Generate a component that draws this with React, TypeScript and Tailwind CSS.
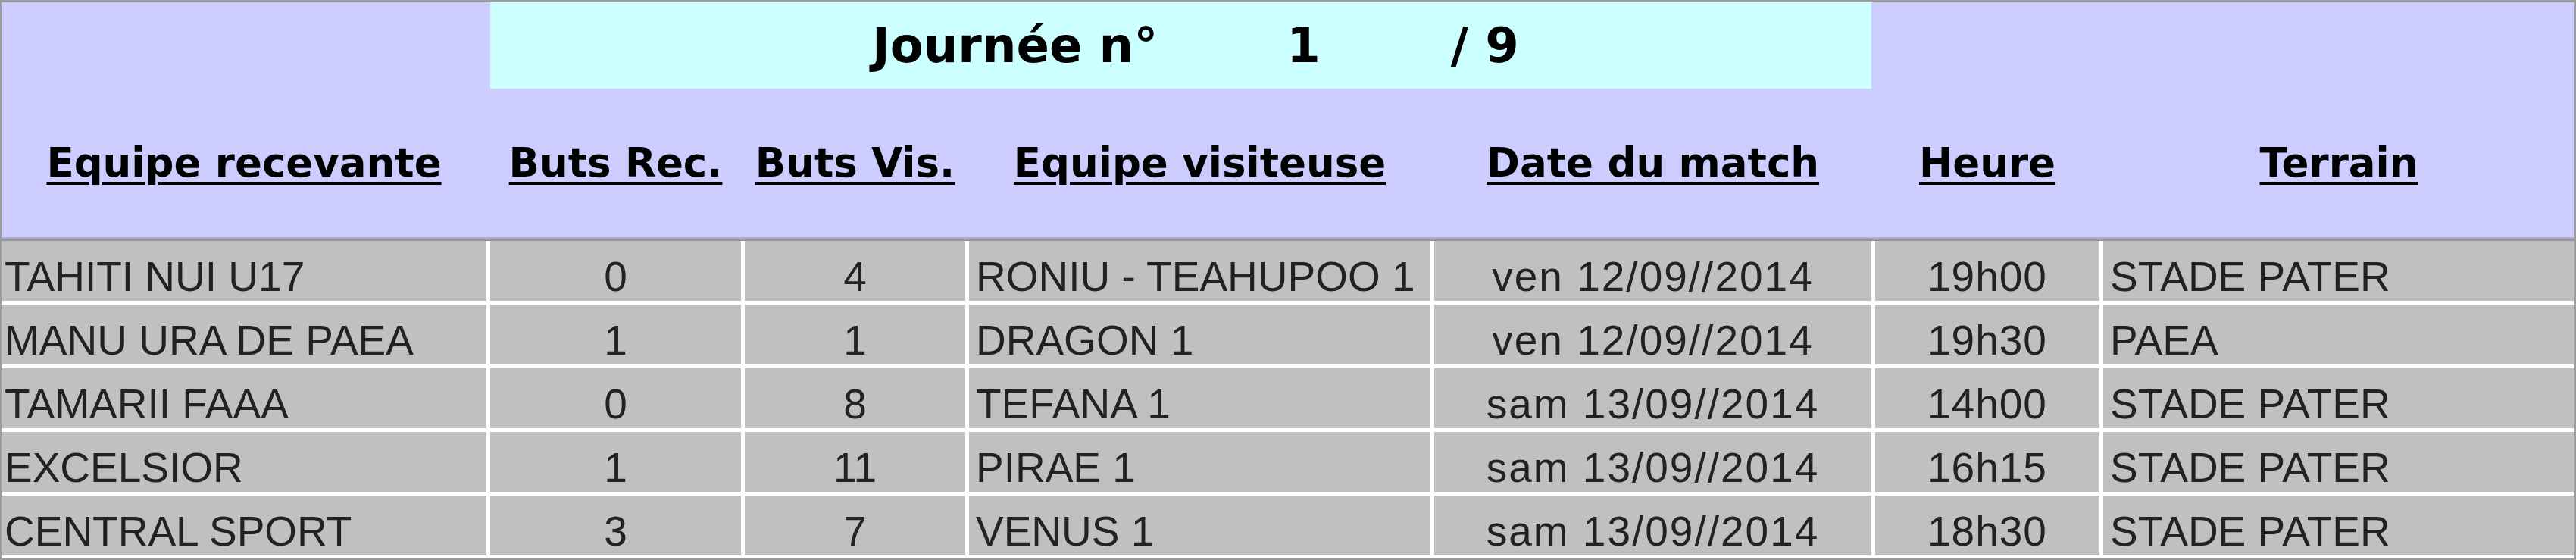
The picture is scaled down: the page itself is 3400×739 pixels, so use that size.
import React from "react";

type Row = {
  home: string;
  bh: string;
  bv: string;
  away: string;
  date: string;
  time: string;
  field: string;
};

const rows: Row[] = [
  { home: "TAHITI NUI U17", bh: "0", bv: "4", away: "RONIU - TEAHUPOO 1", date: "ven 12/09//2014", time: "19h00", field: "STADE PATER" },
  { home: "MANU URA DE PAEA", bh: "1", bv: "1", away: "DRAGON 1", date: "ven 12/09//2014", time: "19h30", field: "PAEA" },
  { home: "TAMARII FAAA", bh: "0", bv: "8", away: "TEFANA 1", date: "sam 13/09//2014", time: "14h00", field: "STADE PATER" },
  { home: "EXCELSIOR", bh: "1", bv: "11", away: "PIRAE 1", date: "sam 13/09//2014", time: "16h15", field: "STADE PATER" },
  { home: "CENTRAL SPORT", bh: "3", bv: "7", away: "VENUS 1", date: "sam 13/09//2014", time: "18h30", field: "STADE PATER" },
];

const headers = [
  "Equipe recevante",
  "Buts Rec.",
  "Buts Vis.",
  "Equipe visiteuse",
  "Date du match",
  "Heure",
  "Terrain",
];

export default function App() {
  return (
    <div className="w-[3400px] h-[739px] bg-white border-[#9c9c9c] border-t-[3px] border-x-2 border-b-2 flex flex-col overflow-hidden">
      {/* Header */}
      <div className="grid grid-cols-[640px_331px_291px_609px_577px_296px_622px] grid-rows-[114px_196px] gap-x-[5px] bg-[#ccccff]">
        <div />
        <div className="col-span-4 bg-[#ccffff] flex items-center pl-[504px] font-[family-name:'Comic_Sans_MS','DejaVu_Sans',sans-serif] font-bold text-[64px] text-black leading-none whitespace-nowrap">
          <span>Journée n°</span>
          <span className="ml-[170px]">1</span>
          <span className="ml-[172px]">/ 9</span>
        </div>
        <div className="col-span-2" />
        {headers.map((h) => (
          <div
            key={h}
            className="flex items-center justify-center font-[family-name:'DejaVu_Sans',Verdana,sans-serif] font-bold text-[53px] leading-[62px] text-black whitespace-nowrap"
          >
            <span className="underline decoration-[4px] underline-offset-[7px]">{h}</span>
          </div>
        ))}
      </div>
      <div className="h-[5px] bg-linear-to-b from-[#b4b4d6] to-[#8e8e8e]" />

      {/* Rows */}
      <div className="flex flex-col gap-y-[5px] font-[family-name:'Liberation_Sans',Arial,sans-serif] text-[55px] leading-[63px] text-[#222222] whitespace-nowrap">
        {rows.map((r, i) => (
          <div
            key={i}
            className="grid grid-cols-[640px_331px_291px_609px_577px_296px_622px] gap-x-[5px] h-[79px] overflow-hidden"
          >
            <div className="bg-[#c0c0c0] flex items-center pt-[16px] pl-[4px]">{r.home}</div>
            <div className="bg-[#c0c0c0] flex items-center justify-center pt-[16px]">{r.bh}</div>
            <div className="bg-[#c0c0c0] flex items-center justify-center pt-[16px]">{r.bv}</div>
            <div className="bg-[#c0c0c0] flex items-center pt-[16px] pl-[9px]">{r.away}</div>
            <div className="bg-[#c0c0c0] flex items-center justify-center pt-[16px] tracking-[2px]">{r.date}</div>
            <div className="bg-[#c0c0c0] flex items-center justify-center pt-[16px] tracking-[1px]">{r.time}</div>
            <div className="bg-[#c0c0c0] flex items-center pt-[16px] pl-[9px]">{r.field}</div>
          </div>
        ))}
      </div>
    </div>
  );
}
